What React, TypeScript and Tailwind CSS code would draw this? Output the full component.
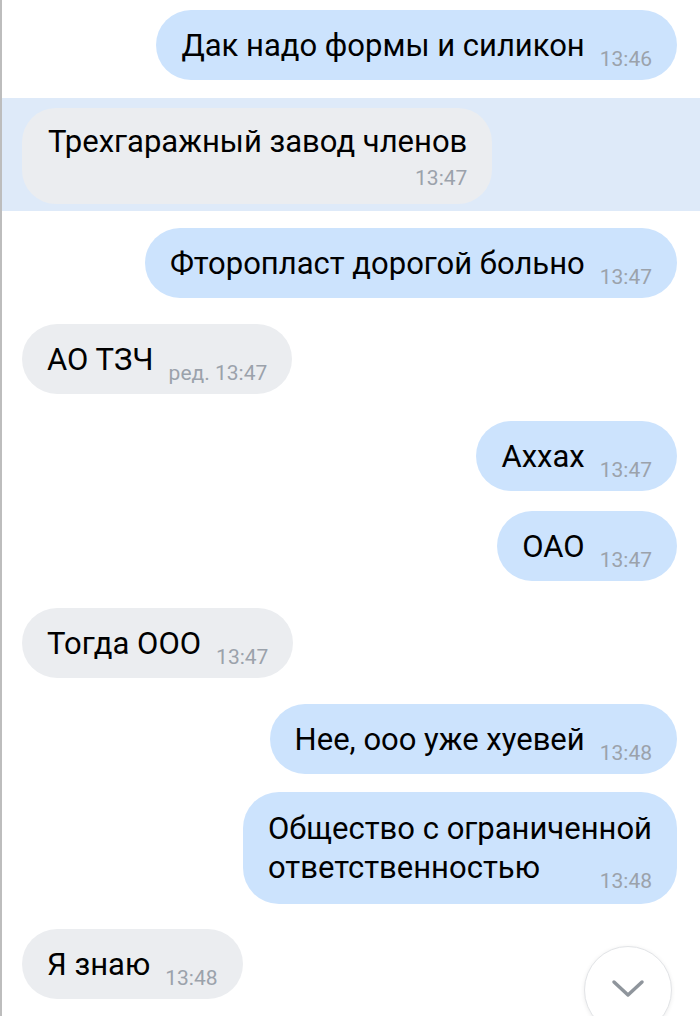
import React from 'react';

type Msg = {
  out: boolean;
  text: string;
  time: string;
  mt: string;
};

function Time({ children, shift = true }: { children: React.ReactNode; shift?: boolean }) {
  return (
    <span className={`shrink-0 text-[21px] leading-[24px] text-[#9ba2ab] ${shift ? 'translate-y-[10px]' : ''}`}>
      {children}
    </span>
  );
}

function Bubble({ msg }: { msg: Msg }) {
  const color = msg.out ? 'bg-[#cce3fd] self-end' : 'bg-[#ebedf0] self-start';
  return (
    <div className={`${msg.mt} ${color} flex items-baseline gap-[15px] rounded-[36px] pl-[25px] pr-[25px] pt-[16px] pb-[15px]`}>
      <span className="text-[31px] leading-[39px] whitespace-nowrap">{msg.text}</span>
      <Time>{msg.time}</Time>
    </div>
  );
}

export default function App() {
  return (
    <div className="relative w-[700px] h-[1016px] overflow-hidden bg-white border-l-2 border-[#bdbdbd] font-['Roboto','Noto_Sans',sans-serif] text-black">
      <div className="flex flex-col pl-[20px] pr-[23px]">
        <Bubble msg={{ out: true, text: 'Дак надо формы и силикон', time: '13:46', mt: 'mt-[10px]' }} />

        {/* выделенное сообщение */}
        <div className="mt-[18px] -ml-[20px] -mr-[23px] bg-[#deeaf9] pl-[20px] pr-[23px] pt-[10px] pb-[7px] flex">
          <div className="bg-[#ebedf0] rounded-[34px] pl-[26px] pr-[25px] pt-[14px] pb-[12px] flex flex-col">
            <span className="text-[31px] leading-[39px] whitespace-nowrap">Трехгаражный завод членов</span>
            <span className="self-end pt-[5px]">
              <Time shift={false}>13:47</Time>
            </span>
          </div>
        </div>

        <Bubble msg={{ out: true, text: 'Фторопласт дорогой больно', time: '13:47', mt: 'mt-[17px]' }} />
        <Bubble msg={{ out: false, text: 'АО ТЗЧ', time: 'ред. 13:47', mt: 'mt-[26px]' }} />
        <Bubble msg={{ out: true, text: 'Аxxax', time: '13:47', mt: 'mt-[27px]' }} />
        <Bubble msg={{ out: true, text: 'ОАО', time: '13:47', mt: 'mt-[20px]' }} />
        <Bubble msg={{ out: false, text: 'Тогда ООО', time: '13:47', mt: 'mt-[27px]' }} />
        <Bubble msg={{ out: true, text: 'Нее, ооо уже хуевей', time: '13:48', mt: 'mt-[26px]' }} />

        <div className="mt-[18px] self-end bg-[#cce3fd] rounded-[36px] pl-[25px] pr-[25px] pt-[17px] pb-[17px] flex flex-col">
          <span className="text-[31px] leading-[39px] whitespace-nowrap">Общество с ограниченной</span>
          <div className="flex items-baseline justify-between gap-[15px]">
            <span className="text-[31px] leading-[39px] whitespace-nowrap">ответственностью</span>
            <Time>13:48</Time>
          </div>
        </div>

        <Bubble msg={{ out: false, text: 'Я знаю', time: '13:48', mt: 'mt-[25px]' }} />
      </div>

      {/* кнопка прокрутки вниз */}
      <button className="absolute left-[582px] top-[946px] w-[88px] h-[88px] rounded-full bg-white border border-[#e2e4e7] shadow-[0_1px_4px_rgba(0,0,0,0.08)] flex items-center justify-center">
        <svg width="34" height="20" viewBox="0 0 34 20" className="-mt-[2px]">
          <polyline points="3,3 17,16 31,3" fill="none" stroke="#8f959c" strokeWidth="3.5" strokeLinecap="round" strokeLinejoin="round" />
        </svg>
      </button>
    </div>
  );
}
